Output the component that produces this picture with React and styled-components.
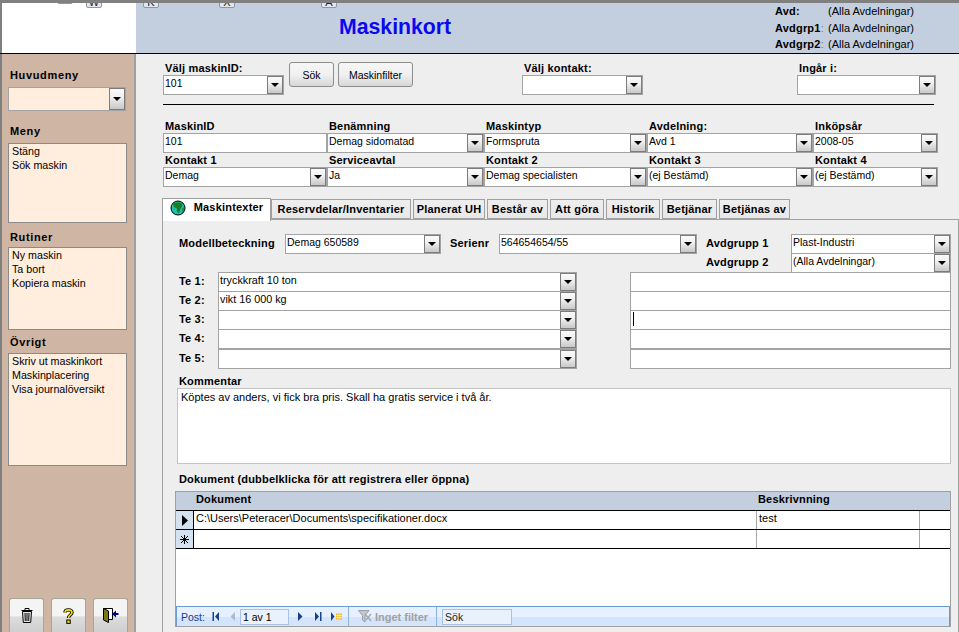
import React from 'react'
import styled, { createGlobalStyle } from 'styled-components'

const GlobalStyle = createGlobalStyle`
  html, body { margin: 0; padding: 0; background: #eeeeee; }
  body { font-family: "Liberation Sans", Arial, sans-serif; font-size: 11px; color: #000; }
  * { box-sizing: border-box; }
`

const Screen = styled.div`
  position: relative;
  width: 959px;
  height: 632px;
  overflow: hidden;
  display: flex;
  flex-direction: column;
  background: #eeeeee;
  border-top: 3px solid #808080;
`

const KeyTip = styled.div`
  position: absolute;
  top: ${p => (p.$short ? -12 : -8)}px;
  left: ${p => p.$x}px;
  width: 16px;
  height: 13px;
  background: #dfe7f2;
  border: 1px solid #8c98a8;
  border-radius: 2px;
  font-size: 11px;
  line-height: 13px;
  text-align: center;
  color: #222;
`

const Header = styled.header`
  display: flex;
  height: 51px;
  flex: none;
  background: #c3cfdf;
  border-bottom: 1px solid #000;
`

const LogoArea = styled.div`
  width: 136px;
  background: #fff;
  border-left: 2px solid #808080;
`

const Title = styled.h1`
  margin: 0 0 0 203px;
  font-size: 21.25px;
  line-height: 48px;
  font-weight: bold;
  color: #0a0af0;
`

const HeaderInfo = styled.div`
  margin-left: auto;
  width: 184px;
  padding-top: 1px;
  display: grid;
  grid-template-columns: 53px 1fr;
  grid-auto-rows: 16.7px;
  line-height: 15px;
`

const InfoLabel = styled.b`
  font-size: 11px;
  letter-spacing: 0.2px;
  white-space: nowrap;
`

const InfoColon = styled.span`
  font-weight: normal;
  color: #777;
`

const Body = styled.div`
  display: flex;
  flex: 1;
  min-height: 0;
`

const Sidebar = styled.aside`
  width: 136px;
  flex: none;
  display: flex;
  flex-direction: column;
  padding: 15px 0 0 6px;
  background: #cfb5a3;
  border-left: 2px solid #808080;
  border-right: 2px solid #a0a0a0;
`

const SideLabel = styled.div`
  font-weight: bold;
  font-size: 11px;
  letter-spacing: 0.65px;
  line-height: 13px;
  padding-left: 2px;
  margin-top: ${p => p.$top || 0}px;
  margin-bottom: ${p => p.$bottom || 0}px;
`

const SideList = styled.div`
  width: 119px;
  height: ${p => p.$h}px;
  background: #ffeddd;
  border: 1px solid #8a8a8a;
  padding: 0 3px;
  line-height: 14px;
  font-size: 10.7px;
`

const SideButtons = styled.div`
  margin-top: auto;
  display: flex;
  gap: 7px;
  padding-left: 1px;
`

const IconButton = styled.div`
  width: 35px;
  height: 34px;
  padding-top: 9px;
  display: flex;
  justify-content: center;
  align-items: flex-start;
  background: linear-gradient(#f4f4f4 50%, #dcdcdc 55%, #cfcfcf);
  border: 1px solid #a8a498;
  border-bottom: 0;
  border-radius: 3px 3px 0 0;
`

const Main = styled.main`
  flex: 1;
  min-width: 0;
  padding: 8px 0 0 27px;
`

const SearchRow = styled.div`
  display: grid;
  grid-template-columns: 126px 49px 184px 275px 139px;
  align-items: start;
`

const FieldLabel = styled.div`
  font-weight: bold;
  font-size: 11px;
  letter-spacing: 0.18px;
  line-height: 13px;
  white-space: nowrap;
  padding-left: 2px;
`

const ComboBox = styled.div`
  display: flex;
  width: ${p => (p.$w ? `${p.$w}px` : '100%')};
  height: ${p => p.$h || 20}px;
  padding-left: 1px;
  align-items: flex-start;
  justify-content: space-between;
  background: ${p => p.$bg || '#fff'};
  border: 1px solid #a3a3a3;
  line-height: 15px;
  font-size: ${p => p.$size || 10.5}px;
  white-space: nowrap;
  margin-top: ${p => p.$top || 0}px;
`

const ArrowButton = styled.div`
  flex: none;
  width: 16px;
  height: 100%;
  display: flex;
  align-items: center;
  justify-content: center;
  background: linear-gradient(#fafafa, #f0f0f0 40%, #c8c8c8);
  border: 1px solid #7c7c7c;
  &::before {
    content: '';
    display: block;
    width: 0;
    height: 0;
    border-top: 4px solid #000;
    border-left: 4px solid transparent;
    border-right: 4px solid transparent;
  }
`

const Combo = ({ children, noArrow, ...rest }) => (
  <ComboBox {...rest}>
    <span>{children}</span>
    {!noArrow && <ArrowButton />}
  </ComboBox>
)

const PushButton = styled.div`
  width: ${p => p.$w}px;
  height: 25px;
  display: flex;
  align-items: center;
  justify-content: center;
  background: linear-gradient(#f6f6f6, #f0f0f0 50%, #d6d6d6);
  border: 1px solid #8d8d8d;
  border-radius: 3px;
  font-size: 10.5px;
`

const Rule = styled.hr`
  margin: 9px 0 0 0;
  width: 771px;
  height: 1px;
  border: 0;
  background: #000;
`

const FieldGrid = styled.div`
  display: grid;
  grid-template-columns: 164px 157px 163px 166px 125px;
  grid-auto-rows: 34px;
  margin-top: ${p => p.$top}px;
`

const Tabs = styled.nav`
  display: flex;
  align-items: flex-end;
  height: 22px;
  margin: 9px 0 0 -1px;
  position: relative;
  z-index: 1;
`

const Tab = styled.div`
  height: ${p => (p.$active ? 23 : 20)}px;
  width: ${p => p.$w}px;
  margin-right: ${p => (p.$active ? 0 : 2)}px;
  margin-bottom: ${p => (p.$active ? -2 : 0)}px;
  display: flex;
  align-items: ${p => (p.$active ? 'flex-start' : 'center')};
  justify-content: center;
  gap: 8px;
  padding-top: ${p => (p.$active ? 1 : 0)}px;
  line-height: 15px;
  font-weight: bold;
  font-size: 11px;
  letter-spacing: 0.2px;
  white-space: nowrap;
  background: ${p => (p.$active ? '#fff' : 'linear-gradient(#eeeeee, #e8e8e8)')};
  border: 1px solid #a0a0a0;
  border-bottom: ${p => (p.$active ? 0 : '1px solid #a0a0a0')};
`

const Panel = styled.section`
  margin-left: -1px;
  height: 422px;
  padding: 14px 6px 0 14px;
  border: 1px solid #a0a0a0;
  border-bottom: 0;
`

const TopFields = styled.div`
  display: grid;
  grid-template-columns: 106px 156px 9px 49px 198px 9px 85px 160px;
  padding-left: 2px;
  height: 38px;
  align-items: start;
`

const StackCell = styled.div`
  display: flex;
  flex-direction: column;
`

const PanelLabel = styled.div`
  font-weight: bold;
  font-size: 11px;
  letter-spacing: 0.18px;
  line-height: 19px;
  white-space: nowrap;
`

const TextRows = styled.div`
  display: grid;
  grid-template-columns: 39px 359px 53px 321px;
  grid-template-rows: 19px 19px 19px 20px 19px;
  padding: 0 0 0 2px;
`

const PlainField = styled.div`
  height: 20px;
  background: #fff;
  border: 1px solid #a3a3a3;
  padding: 1px 2px;
  display: flex;
`

const Caret = styled.i`
  display: block;
  width: 1px;
  height: 14px;
  background: #000;
`

const Comment = styled.div`
  width: 774px;
  height: 76px;
  padding: 1px 3px;
  background: #fff;
  border: 1px solid #c4c4c4;
  line-height: 15px;
`

const SectionLabel = styled.div`
  font-weight: bold;
  font-size: 11px;
  letter-spacing: 0.18px;
  line-height: 13px;
  margin-top: ${p => p.$top}px;
  padding-left: 2px;
`

const Table = styled.div`
  margin: 5px 0 0 -2px;
  width: 776px;
  height: 136px;
  display: flex;
  flex-direction: column;
  background: #fff;
  border: 1px solid #a0a0a0;
`

const TableHead = styled.div`
  display: grid;
  grid-template-columns: 18px 562px 1fr;
  flex: none;
  height: 18px;
  background: #c3cfdf;
  font-weight: bold;
  font-size: 11px;
  letter-spacing: 0.18px;
  line-height: 15px;
  span { padding-left: 2px; }
`

const TableRow = styled.div`
  display: grid;
  grid-template-columns: 18px 1fr 163px 30px;
  flex: none;
  height: 19px;
  border-top: 1px solid #000;
  line-height: 15px;
`

const RowSelector = styled.div`
  display: flex;
  align-items: center;
  justify-content: center;
  background: #d4e2f0;
  border-right: 1px solid #000;
`

const Cell = styled.div`
  padding-left: 2px;
  border-right: ${p => (p.$last ? 0 : '1px solid #a8a8a8')};
`

const RowEnd = styled.div`
  border-top: 1px solid #000;
`

const NavBar = styled.div`
  margin-top: auto;
  flex: none;
  height: 20px;
  display: flex;
  align-items: center;
  font-size: 10.5px;
  color: #15428b;
  background: linear-gradient(#e7f0fe 50%, #d3e4fc 50%);
  border: 1px solid #6b9bd8;
  border-bottom: 0;
  padding-left: 4px;
`

const NavIcon = styled.svg`
  flex: none;
  margin-left: ${p => p.$left || 0}px;
`

const NavInput = styled.div`
  width: 49px;
  height: 16px;
  margin-left: 5px;
  padding-left: 2px;
  color: #000;
  background: #e9f1fd;
  border: 1px solid #a9c3e6;
  line-height: 14px;
`

const NavDivider = styled.div`
  width: 1px;
  height: 100%;
  background: #8fb2e0;
  margin-left: ${p => p.$left}px;
`

const FilterText = styled.span`
  margin-left: 3px;
  color: #a0a0a0;
  font-weight: bold;
  font-size: 11px;
`

const SearchBox = styled.div`
  width: 70px;
  height: 16px;
  margin-left: 5px;
  padding-left: 2px;
  color: #222;
  background: #e9f1fd;
  border: 1px solid #a9c3e6;
  line-height: 14px;
`

const Globe = () => (
  <svg width="16" height="16" viewBox="0 0 16 16">
    <circle cx="8" cy="8" r="7" fill="#19c0b0" stroke="#000" />
    <path d="M5 2.5 L11 2.5 L12.5 5.5 L10.5 9 L9 13 L7 12 L6.8 8.5 L4 7 L3.2 4.5 Z" fill="#1c7d20" />
    <path d="M12.5 8 L14 7.5 L13.5 11 L12 11.5 Z" fill="#1c7d20" />
  </svg>
)

const TrashIcon = () => (
  <svg width="12" height="15" viewBox="0 0 12 15">
    <path d="M0.5 2.5 H11.5 M4 2 V0.5 H8 V2" fill="none" stroke="#000" />
    <path d="M1.5 3.5 H10.5 L9.7 14.5 H2.3 Z" fill="#e4e4e4" stroke="#000" />
    <path d="M4 5 L4.3 13 M6 5 V13 M8 5 L7.7 13" stroke="#000" />
  </svg>
)

const HelpIcon = () => (
  <svg width="11" height="16" viewBox="0 0 11 16">
    <path d="M2 4.5 C2 1 9 1 9 4.5 C9 7 5.5 7 5.5 10" fill="none" stroke="#000" strokeWidth="3.4" />
    <path d="M2 4.5 C2 1 9 1 9 4.5 C9 7 5.5 7 5.5 10" fill="none" stroke="#f7e000" strokeWidth="1.6" />
    <rect x="3.8" y="12" width="3.4" height="3.4" fill="#f7e000" stroke="#000" />
  </svg>
)

const ExitIcon = () => (
  <svg width="16" height="15" viewBox="0 0 16 15">
    <path d="M0.5 0.5 H9.5 V11.5 H0.5 Z" fill="#fff" stroke="#000" />
    <path d="M0.5 0.5 L5.5 3 V14.5 L0.5 12 Z" fill="#7d7a14" stroke="#000" />
    <path d="M15.5 5 H13 V2.5 L9 6 L13 9.5 V7 H15.5 Z" fill="#000090" />
  </svg>
)

const NavFirst = () => (
  <NavIcon $left={7} width="8" height="9" viewBox="0 0 8 9">
    <path d="M0.5 0 H2 V9 H0.5 Z M7 0 V9 L3 4.5 Z" fill="#15428b" />
  </NavIcon>
)

const NavPrev = () => (
  <NavIcon $left={10} width="5" height="9" viewBox="0 0 5 9">
    <path d="M5 0 V9 L0.5 4.5 Z" fill="#a8bcd8" />
  </NavIcon>
)

const NavNext = () => (
  <NavIcon $left={9} width="5" height="9" viewBox="0 0 5 9">
    <path d="M0 0 V9 L4.5 4.5 Z" fill="#15428b" />
  </NavIcon>
)

const NavLast = () => (
  <NavIcon $left={12} width="7" height="9" viewBox="0 0 7 9">
    <path d="M0 0 V9 L4 4.5 Z M5 0 H6.5 V9 H5 Z" fill="#15428b" />
  </NavIcon>
)

const NavNew = () => (
  <NavIcon $left={9} width="12" height="9" viewBox="0 0 12 9">
    <path d="M0 0 V9 L3.5 4.5 Z" fill="#15428b" />
    <rect x="5" y="1.5" width="6" height="6" fill="#f0b820" />
    <path d="M5 3.5 H11 M5 5.5 H11 M7 1.5 V7.5 M9 1.5 V7.5" stroke="#fff3c4" strokeWidth="0.7" />
  </NavIcon>
)

const NavFilter = () => (
  <NavIcon $left={9} width="14" height="13" viewBox="0 0 14 13">
    <path d="M0.5 0.5 H11 L7 5.5 V12 L4.5 10 V5.5 Z" fill="#c4c8ce" stroke="#9aa0a8" />
    <path d="M7 4 L13 11 M13 4 L8 10" stroke="#a4a8ae" strokeWidth="1.4" />
  </NavIcon>
)

const tabs = [
  ['Reservdelar/Inventarier', 140],
  ['Planerat UH', 72],
  ['Består av', 61],
  ['Att göra', 54],
  ['Historik', 54],
  ['Betjänar', 55],
  ['Betjänas av', 71],
]

const teRows = [
  ['Te 1:', 'tryckkraft 10 ton'],
  ['Te 2:', 'vikt 16 000 kg'],
  ['Te 3:', ''],
  ['Te 4:', ''],
  ['Te 5:', ''],
]

const App = () => (
  <>
    <GlobalStyle />
    <Screen>
      <KeyTip $x={57} $short />
      <KeyTip $x={86}>W</KeyTip>
      <KeyTip $x={143}>K</KeyTip>
      <KeyTip $x={219}>X</KeyTip>
      <KeyTip $x={321}>A</KeyTip>
      <Header>
        <LogoArea />
        <Title>Maskinkort</Title>
        <HeaderInfo>
          <InfoLabel>Avd:</InfoLabel><span>(Alla Avdelningar)</span>
          <InfoLabel>Avdgrp1<InfoColon>:</InfoColon></InfoLabel><span>(Alla Avdelningar)</span>
          <InfoLabel>Avdgrp2<InfoColon>:</InfoColon></InfoLabel><span>(Alla Avdelningar)</span>
        </HeaderInfo>
      </Header>
      <Body>
        <Sidebar>
          <SideLabel $bottom={5}>Huvudmeny</SideLabel>
          <Combo $w={118} $h={24} $bg="#ffeddd" />
          <SideLabel $top={14} $bottom={5}>Meny</SideLabel>
          <SideList $h={80}>Stäng<br />Sök maskin</SideList>
          <SideLabel $top={8} $bottom={3}>Rutiner</SideLabel>
          <SideList $h={83}>Ny maskin<br />Ta bort<br />Kopiera maskin</SideList>
          <SideLabel $top={6} $bottom={4}>Övrigt</SideLabel>
          <SideList $h={113}>Skriv ut maskinkort<br />Maskinplacering<br />Visa journalöversikt</SideList>
          <SideButtons>
            <IconButton><TrashIcon /></IconButton>
            <IconButton><HelpIcon /></IconButton>
            <IconButton><ExitIcon /></IconButton>
          </SideButtons>
        </Sidebar>
        <Main>
          <SearchRow>
            <div>
              <FieldLabel>Välj maskinID:</FieldLabel>
              <Combo $w={121}>101</Combo>
            </div>
            <PushButton $w={45}>Sök</PushButton>
            <PushButton $w={75}>Maskinfilter</PushButton>
            <div>
              <FieldLabel>Välj kontakt:</FieldLabel>
              <Combo $w={121} />
            </div>
            <div>
              <FieldLabel>Ingår i:</FieldLabel>
              <Combo $w={139} />
            </div>
          </SearchRow>
          <Rule />
          <FieldGrid $top={15}>
            <div><FieldLabel>MaskinID</FieldLabel><Combo noArrow>101</Combo></div>
            <div><FieldLabel>Benämning</FieldLabel><Combo>Demag sidomatad</Combo></div>
            <div><FieldLabel>Maskintyp</FieldLabel><Combo>Formspruta</Combo></div>
            <div><FieldLabel>Avdelning:</FieldLabel><Combo>Avd 1</Combo></div>
            <div><FieldLabel>Inköpsår</FieldLabel><Combo>2008-05</Combo></div>
            <div><FieldLabel>Kontakt 1</FieldLabel><Combo>Demag</Combo></div>
            <div><FieldLabel>Serviceavtal</FieldLabel><Combo>Ja</Combo></div>
            <div><FieldLabel>Kontakt 2</FieldLabel><Combo>Demag specialisten</Combo></div>
            <div><FieldLabel>Kontakt 3</FieldLabel><Combo>(ej Bestämd)</Combo></div>
            <div><FieldLabel>Kontakt 4</FieldLabel><Combo>(ej Bestämd)</Combo></div>
          </FieldGrid>
          <Tabs>
            <Tab $active $w={109}><Globe />Maskintexter</Tab>
            {tabs.map(([label, w]) => <Tab key={label} $w={w}>{label}</Tab>)}
          </Tabs>
          <Panel>
            <TopFields>
              <PanelLabel>Modellbeteckning</PanelLabel>
              <Combo>Demag 650589</Combo>
              <span />
              <PanelLabel>Serienr</PanelLabel>
              <Combo>564654654/55</Combo>
              <span />
              <StackCell>
                <PanelLabel>Avdgrupp 1</PanelLabel>
                <PanelLabel>Avdgrupp 2</PanelLabel>
              </StackCell>
              <StackCell>
                <Combo>Plast-Industri</Combo>
                <Combo $top={-1}>(Alla Avdelningar)</Combo>
              </StackCell>
            </TopFields>
            <TextRows>
              {teRows.map(([label, text], i) => (
                <React.Fragment key={label}>
                  <PanelLabel>{label}</PanelLabel>
                  <Combo $size={10.8}>{text}</Combo>
                  <span />
                  <PlainField>{i === 2 && <Caret />}</PlainField>
                </React.Fragment>
              ))}
            </TextRows>
            <SectionLabel $top={7}>Kommentar</SectionLabel>
            <Comment>Köptes av anders, vi fick bra pris. Skall ha gratis service i två år.</Comment>
            <SectionLabel $top={9}>Dokument (dubbelklicka för att registrera eller öppna)</SectionLabel>
            <Table>
              <TableHead>
                <i />
                <span>Dokument</span>
                <span>Beskrivnning</span>
              </TableHead>
              <TableRow>
                <RowSelector>
                  <svg width="8" height="11" viewBox="0 0 8 11"><path d="M1 0 L7 5.5 L1 11 Z" fill="#000" /></svg>
                </RowSelector>
                <Cell>C:\Users\Peteracer\Documents\specifikationer.docx</Cell>
                <Cell>test</Cell>
                <Cell $last />
              </TableRow>
              <TableRow>
                <RowSelector>
                  <svg width="9" height="9" viewBox="0 0 9 9"><path d="M4.5 0 V9 M0 4.5 H9 M1 1 L8 8 M8 1 L1 8" stroke="#000" /></svg>
                </RowSelector>
                <Cell />
                <Cell />
                <Cell $last />
              </TableRow>
              <RowEnd />
              <NavBar>
                Post:
                <NavFirst />
                <NavPrev />
                <NavInput>1 av 1</NavInput>
                <NavNext />
                <NavLast />
                <NavNew />
                <NavDivider $left={5} />
                <NavFilter />
                <FilterText>Inget filter</FilterText>
                <NavDivider $left={8} />
                <SearchBox>Sök</SearchBox>
              </NavBar>
            </Table>
          </Panel>
        </Main>
      </Body>
    </Screen>
  </>
)

export default App
